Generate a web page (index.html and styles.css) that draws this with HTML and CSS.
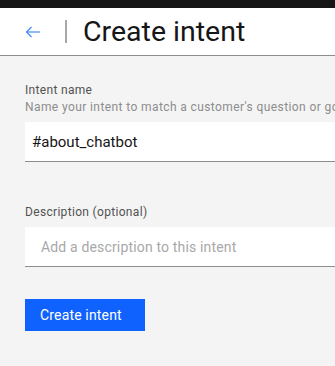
FILE: index.html
```html
<!DOCTYPE html>
<html lang="en">
<head>
    <meta charset="UTF-8">
    <meta name="viewport" content="width=device-width, initial-scale=1.0">
    <title>Create intent</title>
    <link rel="stylesheet" href="styles.css">
</head>
<body>
    <div class="topbar"></div>

    <header class="page-header">
        <a class="back" href="#" aria-label="Back">
            <svg width="16" height="16" viewBox="0 0 16 16" fill="none" stroke="currentColor" stroke-width="1.2">
                <path d="M15 8H1.5"/>
                <path d="M6.5 3L1.5 8l5 5"/>
            </svg>
        </a>
        <span class="divider"></span>
        <h1>Create intent</h1>
    </header>

    <main class="content">
        <div class="field">
            <label for="intent_name">Intent name</label>
            <p class="helper">Name your intent to match a customer's question or goal</p>
            <input type="text" id="intent_name" class="name-input" value="#about_chatbot">
        </div>

        <div class="field">
            <label for="description">Description (optional)</label>
            <input type="text" id="description" placeholder="Add a description to this intent">
        </div>

        <button type="button">Create intent</button>
    </main>
</body>
</html>
```
FILE: styles.css
```css
body {
    font-family: Roboto, "Liberation Sans", sans-serif;
    margin: 0;
    padding: 0;
    background-color: #f4f4f4;
    color: #161616;
    overflow: hidden;
}

.topbar {
    height: 8px;
    background-color: #161616;
}

.page-header {
    display: flex;
    align-items: center;
    height: 47px;
    padding-left: 25px;
    background-color: #fff;
    border-bottom: 1px solid #8d8d8d;
}

.back {
    display: flex;
    color: #4589ff;
    width: 16px;
    height: 16px;
}

.divider {
    width: 2px;
    height: 23px;
    margin-left: 24px;
    background-color: #a8a8a8;
}

h1 {
    margin: 0 0 0 16px;
    font-size: 28.5px;
    font-weight: 400;
    line-height: 36px;
    white-space: nowrap;
}

.content {
    padding: 26px 0 0 25px;
    overflow: hidden;
}

.field {
    margin-bottom: 42px;
}

label {
    display: block;
    font-size: 12px;
    line-height: 16px;
    letter-spacing: 0.32px;
    color: #525252;
    margin-bottom: 1px;
}

.helper {
    margin: 0 0 7px;
    font-size: 12px;
    line-height: 16px;
    letter-spacing: 0.4px;
    color: #8d8d8d;
    white-space: nowrap;
}

input {
    display: block;
    width: 310px;
    height: 40px;
    padding: 0 16px;
    margin-top: 7px;
    box-sizing: border-box;
    border: none;
    border-bottom: 1px solid #8d8d8d;
    background-color: #fff;
    font-family: inherit;
    font-size: 14px;
    letter-spacing: 0.16px;
    color: #161616;
    outline: none;
}

.name-input {
    margin-top: 0;
    padding-left: 7px;
    font-size: 15px;
    letter-spacing: 0;
}

input::placeholder {
    color: #a8a8a8;
}

button {
    display: block;
    width: 120px;
    height: 32px;
    margin-top: -10px;
    padding: 0 15px;
    text-align: left;
    background-color: #0f62fe;
    color: #fff;
    border: none;
    font-family: inherit;
    font-size: 14px;
    letter-spacing: 0.16px;
    cursor: pointer;
}
```
